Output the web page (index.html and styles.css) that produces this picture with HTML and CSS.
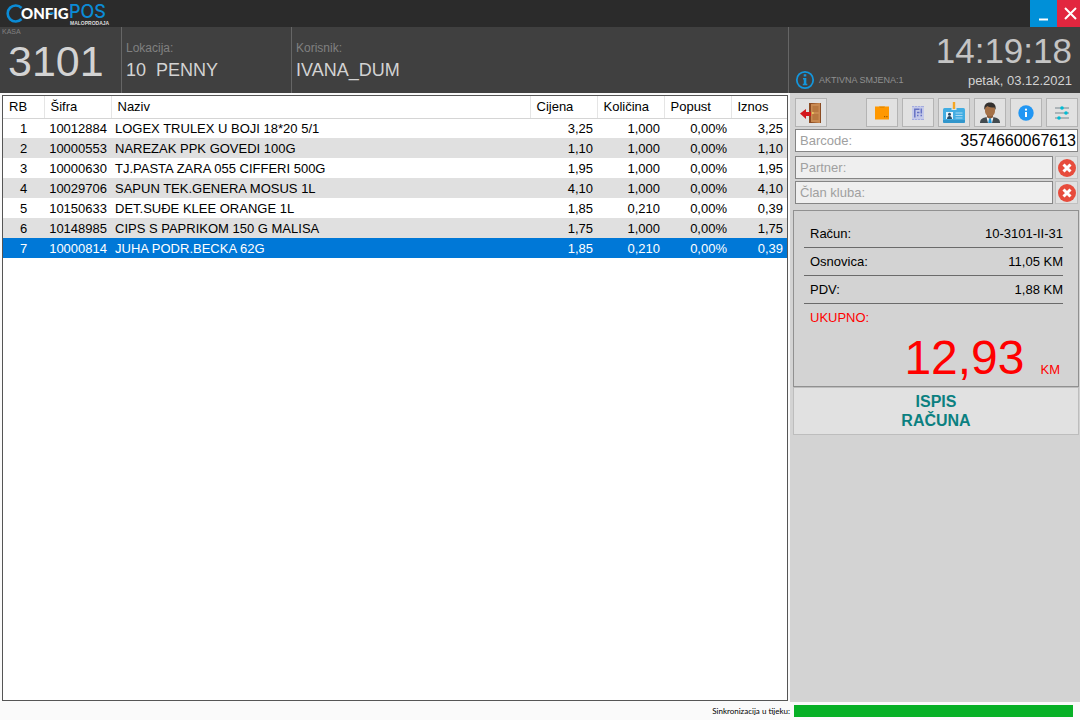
FILE: index.html
```
<!DOCTYPE html>
<html lang="bs">
<head>
  <meta charset="UTF-8">
  <title>ConfigPOS Maloprodaja</title>
  <meta name="viewport" content="width=device-width, initial-scale=1.0">
  <link rel="stylesheet" href="styles.css">
</head>
<body>

<div class="titlebar">
  <svg class="logo" width="112" height="27" viewBox="0 0 112 27" role="img" aria-label="ConfigPOS maloprodaja">
    <path d="M21.500 8A8 8 0 1 0 21.500 19" fill="none" stroke="#0b8bd6" stroke-width="2.600"/>
    <text class="logo-name" x="21" y="19">ONFIG</text>
    <path d="M49.500 12.300h4v2h-4z" fill="#0b8bd6"/>
    <text class="logo-pos" x="69" y="18">POS</text>
    <text class="logo-sub" x="70" y="25">MALOPRODAJA</text>
  </svg>
  <div class="window-buttons">
    <button class="minimize" aria-label="Minimize">
      <svg width="10" height="4" viewBox="0 0 10 4"><path d="M0 1.5h9" stroke="#fff" stroke-width="2"/></svg>
    </button>
    <button class="close" aria-label="Close">
      <svg width="13" height="13" viewBox="0 0 13 13"><path d="M1 1l11 11M12 1L1 12" stroke="#fff" stroke-width="2"/></svg>
    </button>
  </div>
</div>

<header class="header">
  <div class="kasa">
    <span class="kasa-label">KASA</span>
    <span class="kasa-number">3101</span>
  </div>
  <div class="info">
    <span class="info-label">Lokacija:</span>
    <span class="info-value">10 &nbsp;PENNY</span>
  </div>
  <div class="info">
    <span class="info-label">Korisnik:</span>
    <span class="info-value">IVANA_DUM</span>
  </div>
  <div class="clock">
    <div class="time">14:19:18</div>
    <div class="clock-row">
      <svg width="20" height="20" viewBox="0 0 20 20">
        <circle cx="10" cy="10" r="8.2" fill="none" stroke="#1496dc" stroke-width="1.8"/>
        <path d="M8.700 4.200h2.600v2.400H8.700zM8 8h3.300v5.800h1v1.400H7.800v-1.400h1V9.400H8z" fill="#1496dc"/>
      </svg>
      <span class="shift">AKTIVNA SMJENA:1</span>
      <span class="date">petak, 03.12.2021</span>
    </div>
  </div>
</header>

<main class="main">
  <div class="items">
    <table>
      <thead>
        <tr>
          <th class="col-rb">RB</th>
          <th class="col-sifra">Šifra</th>
          <th>Naziv</th>
          <th class="col-num">Cijena</th>
          <th class="col-num">Količina</th>
          <th class="col-num">Popust</th>
          <th class="col-iznos">Iznos</th>
        </tr>
      </thead>
      <tbody>
        <tr><td>1</td><td>10012884</td><td>LOGEX TRULEX U BOJI 18*20 5/1</td><td>3,25</td><td>1,000</td><td>0,00%</td><td>3,25</td></tr>
        <tr><td>2</td><td>10000553</td><td>NAREZAK PPK GOVEDI 100G</td><td>1,10</td><td>1,000</td><td>0,00%</td><td>1,10</td></tr>
        <tr><td>3</td><td>10000630</td><td>TJ.PASTA ZARA 055 CIFFERI 500G</td><td>1,95</td><td>1,000</td><td>0,00%</td><td>1,95</td></tr>
        <tr><td>4</td><td>10029706</td><td>SAPUN TEK.GENERA MOSUS 1L</td><td>4,10</td><td>1,000</td><td>0,00%</td><td>4,10</td></tr>
        <tr><td>5</td><td>10150633</td><td>DET.SUĐE KLEE ORANGE 1L</td><td>1,85</td><td>0,210</td><td>0,00%</td><td>0,39</td></tr>
        <tr><td>6</td><td>10148985</td><td>CIPS S PAPRIKOM 150 G MALISA</td><td>1,75</td><td>1,000</td><td>0,00%</td><td>1,75</td></tr>
        <tr class="selected"><td>7</td><td>10000814</td><td>JUHA PODR.BECKA 62G</td><td>1,85</td><td>0,210</td><td>0,00%</td><td>0,39</td></tr>
      </tbody>
    </table>
  </div>

  <aside class="side">
    <div class="toolbar">
      <button class="tool exit" aria-label="Izlaz">
        <svg width="22" height="22" viewBox="0 0 22 22">
          <path d="M9 1h12v20H9z" fill="#8a4b22"/>
          <path d="M11 2l9-1v20l-9-1z" fill="#c98a52"/>
          <path d="M12.500 4h6v6h-6zM12.500 12h6v6h-6z" fill="#b87840"/>
          <circle cx="12.800" cy="11" r="1" fill="#f0d060"/>
          <path d="M0 11.500L6 7v3h5v4H6v3z" fill="#d3161c"/>
        </svg>
      </button>
      <button class="tool" aria-label="Artikli">
        <svg width="16" height="16" viewBox="0 0 16 16">
          <path d="M1 1.500h14v13H1z" fill="#ff9800"/>
          <path d="M5 1.500h6l-1 1.500H6z" fill="#e68a00"/>
          <path d="M10 11h1.200v1.200H10zM12.300 11h1.200v1.200h-1.200z" fill="#9c5a00"/>
        </svg>
      </button>
      <button class="tool" aria-label="Dokumenti">
        <svg width="16" height="16" viewBox="0 0 16 16">
          <path d="M2 1h12v14H2z" fill="#c5cae9"/>
          <path d="M2 1.500h2M5 1.500h2M8 1.500h2M11 1.500h3M2 14.500h2M5 14.500h2M8 14.500h2M11 14.500h3" stroke="#a4acdf"/>
          <path d="M4.800 3.500v9M4.800 4.300H9.500M7 7.500h2.500M11.300 3.500v5M7 10.500h1.500M10.500 10.500h1.500" fill="none" stroke="#6672c4" stroke-width="1.500"/>
        </svg>
      </button>
      <button class="tool" aria-label="Kartica">
        <svg width="22" height="22" viewBox="0 0 22 22">
          <rect x="0" y="6" width="22" height="15" rx="1.500" fill="#42ade2"/>
          <path d="M0 18h22v1.500a1.500 1.500 0 0 1-1.500 1.500h-19A1.500 1.500 0 0 1 0 19.500z" fill="#3296cb"/>
          <path d="M3 10h7v7H3z" fill="#e8f5fc"/>
          <circle cx="6.500" cy="12.200" r="1.500" fill="#244b68"/>
          <path d="M4 17c0-4 5-4 5 0z" fill="#244b68"/>
          <path d="M12.500 11h7M12.500 13.500h7M12.500 16h7" stroke="#a8daf5"/>
          <path d="M8.500 5h5v3h-5z" fill="#d5e2ea"/>
          <path d="M9.800 0h2.400v7H9.800z" fill="#f5a623"/>
        </svg>
      </button>
      <button class="tool" aria-label="Korisnik">
        <svg width="22" height="22" viewBox="0 0 22 22">
          <path d="M1 21c0-4 2.500-5 6.500-6h7c4 1 6.500 2 6.500 6z" fill="#424b50"/>
          <path d="M8 13h6v3l-3 3-3-3z" fill="#8a5c3c"/>
          <path d="M7.500 15l3.500 2 3.500-2-1.500 6H9z" fill="#f4f8fa"/>
          <path d="M10 16.500h2l.8 4.500H9.200z" fill="#2196d8"/>
          <path d="M6 6c0-4 10-4 10 0v3c0 7-10 7-10 0z" fill="#a47148"/>
          <path d="M5.500 8C4.500 3 7 .5 11 .5S17.500 3 16.500 8l-1-2.500c-3 0-6-.500-7-1.500L6.500 5.500z" fill="#33302e"/>
        </svg>
      </button>
      <button class="tool" aria-label="Informacije">
        <svg width="16" height="16" viewBox="0 0 16 16">
          <circle cx="8" cy="8" r="7.700" fill="#2196f3"/>
          <circle cx="8" cy="4.700" r="1.100" fill="#fff"/>
          <path d="M8 7v5" stroke="#fff" stroke-width="2"/>
        </svg>
      </button>
      <button class="tool" aria-label="Postavke">
        <svg width="16" height="16" viewBox="0 0 16 16">
          <path d="M1 3h14M1 8h14M1 13h14" stroke="#9aa5ab" stroke-width="1.500"/>
          <circle cx="8" cy="3" r="1.800" fill="#00bcd4"/>
          <circle cx="12" cy="8" r="1.800" fill="#00bcd4"/>
          <circle cx="5" cy="13" r="1.800" fill="#00bcd4"/>
        </svg>
      </button>
    </div>

    <div class="field barcode">
      <label for="barcode">Barcode:</label>
      <input type="text" id="barcode" value="3574660067613">
    </div>

    <div class="field-row">
      <div class="field">
        <label for="partner">Partner:</label>
        <input type="text" id="partner">
      </div>
      <button class="clear" aria-label="Obriši partnera">
        <svg width="20" height="20" viewBox="0 0 20 20"><circle cx="10" cy="10" r="9" fill="#e74c3c"/><path d="M6.500 6.500l7 7M13.500 6.500l-7 7" stroke="#fff" stroke-width="3"/></svg>
      </button>
    </div>

    <div class="field-row">
      <div class="field">
        <label for="clan">Član kluba:</label>
        <input type="text" id="clan">
      </div>
      <button class="clear" aria-label="Obriši člana kluba">
        <svg width="20" height="20" viewBox="0 0 20 20"><circle cx="10" cy="10" r="9" fill="#e74c3c"/><path d="M6.500 6.500l7 7M13.500 6.500l-7 7" stroke="#fff" stroke-width="3"/></svg>
      </button>
    </div>

    <div class="totals">
      <div class="line"><span>Račun:</span><span>10-3101-II-31</span></div>
      <div class="line"><span>Osnovica:</span><span>11,05 KM</span></div>
      <div class="line"><span>PDV:</span><span>1,88 KM</span></div>
      <div class="total-label">UKUPNO:</div>
      <div class="total"><span class="amount">12,93</span><span>KM</span></div>
    </div>
    <button class="print">ISPIS<br>RAČUNA</button>
  </aside>
</main>

<footer class="footer">
  <label for="sync">Sinkronizacija u tijeku:</label>
  <progress id="sync" value="100" max="100"></progress>
</footer>

</body>
</html>
```
FILE: styles.css
```
* {
  box-sizing: border-box;
}

body {
  margin: 0;
  min-height: 100vh;
  display: flex;
  flex-direction: column;
  font-family: "Liberation Sans", Arial, sans-serif;
  font-size: 13px;
  color: #000;
  background: #fafafa;
}

button {
  padding: 0;
  font-family: inherit;
  cursor: pointer;
}

svg {
  display: block;
  flex: none;
}

/* title bar */
.titlebar {
  display: flex;
  justify-content: space-between;
  height: 27px;
  background: #2b2b2b;
}

.logo-name {
  font: 900 15px Lato, sans-serif;
  fill: #fff;
}

.logo-pos {
  font: 500 18px Inter, sans-serif;
  fill: #0b8bd6;
}

.logo-sub {
  font: bold 5px "Liberation Sans", sans-serif;
  fill: #ddd;
}

.window-buttons {
  display: flex;
}

.window-buttons button {
  display: flex;
  justify-content: center;
  align-items: center;
  border: none;
}

.window-buttons .minimize {
  width: 27px;
  padding-top: 12px;
  background: #0090d8;
}

.window-buttons .close {
  width: 23px;
  padding-left: 3px;
  background: #e2263f;
}

/* header */
.header {
  display: grid;
  grid-template-columns: 121px 170px 1fr 292px;
  height: 66px;
  background: #404040;
  color: #d3d3d3;
}

.header > div + div {
  border-left: 1px solid #666;
}

.kasa {
  display: flex;
  flex-direction: column;
  padding-left: 2px;
}

.kasa-label {
  font-size: 7px;
  line-height: 9px;
  color: #808080;
}

.kasa-number {
  padding-left: 6px;
  font-size: 43px;
  line-height: 50px;
}

.info {
  display: flex;
  flex-direction: column;
  padding: 13px 0 0 4px;
}

.info-label {
  font-size: 12px;
  line-height: 16px;
  color: #808080;
}

.info-value {
  font-size: 18px;
  line-height: 28px;
}

.clock {
  padding: 4px 8px 0 6px;
}

.time {
  font-size: 35px;
  line-height: 40px;
  text-align: right;
  color: #c4c4c4;
}

.clock-row {
  display: flex;
  align-items: center;
  height: 18px;
}

.shift {
  padding-left: 4px;
  font-size: 9px;
  color: #909090;
}

.date {
  margin-left: auto;
}

/* main area */
.main {
  flex: 1;
  display: grid;
  grid-template-columns: 1fr 290px;
}

.items {
  margin: 2px 2px 1px;
  border: 1px solid #555;
  background: #fff;
}

table {
  width: 100%;
  table-layout: fixed;
  border-collapse: collapse;
}

th {
  height: 22px;
  padding: 0 6px;
  border-right: 1px solid #e5e5e5;
  border-bottom: 1px solid #d5d5d5;
  font-weight: normal;
  text-align: left;
}

th:last-child {
  border-right: none;
}

.col-rb {
  width: 41px;
}

.col-sifra,
.col-num {
  width: 67px;
}

.col-iznos {
  width: 56px;
}

td {
  height: 20px;
  padding: 0 4px;
  text-align: right;
  white-space: nowrap;
}

td:first-child {
  text-align: center;
}

td:nth-child(3) {
  text-align: left;
}

tbody tr:nth-child(even) {
  background: #e0e0e0;
}

tbody tr.selected {
  background: #0078d7;
  color: #fff;
}

/* right side */
.side {
  padding: 5px 1px 0 3px;
  background: #d3d3d3;
}

.toolbar {
  display: flex;
  gap: 4px;
  margin: 0 1px 2px 2px;
}

.tool {
  display: flex;
  justify-content: center;
  align-items: center;
  width: 32px;
  height: 29px;
  border: 1px solid #b4b4b4;
  background: #e1e1e1;
}

.exit {
  margin-right: auto;
}

.field {
  flex: 1;
  min-width: 0;
  display: flex;
  align-items: center;
  height: 23px;
  padding: 0 1px 0 4px;
  border: 1px solid #858585;
  background: #efefef;
}

.field label {
  color: #a0a0a0;
}

.field input {
  flex: 1;
  min-width: 0;
  padding: 0;
  border: none;
  outline: none;
  background: transparent;
  font-family: inherit;
  font-size: 16px;
  text-align: right;
}

.barcode {
  margin: 0 1px 4px 2px;
  background: #fff;
}

.field-row {
  display: flex;
  gap: 2px;
  margin: 0 1px 2px 2px;
}

.clear {
  flex: none;
  display: flex;
  justify-content: center;
  align-items: center;
  width: 23px;
  height: 23px;
  border: 1px solid #c0c0c0;
  background: #e1e1e1;
}

.totals {
  margin-top: 6px;
  padding: 9px 15px 0 10px;
  height: 177px;
  border: 1px solid #909090;
}

.line {
  display: flex;
  justify-content: space-between;
  padding-left: 6px;
  line-height: 27px;
  border-bottom: 1px solid #6a6a6a;
}

.total-label {
  padding-left: 6px;
  line-height: 28px;
  color: #f00;
}

.total {
  display: flex;
  justify-content: flex-end;
  align-items: baseline;
  gap: 16px;
  padding-right: 3px;
  line-height: 52px;
  color: #f00;
}

.amount {
  font-size: 48px;
}

.print {
  width: 100%;
  height: 48px;
  border: 1px solid #bdbdbd;
  background: #e1e1e1;
  color: #0b8080;
  font-size: 16px;
  font-weight: bold;
  line-height: 19px;
}

/* footer */
.footer {
  display: flex;
  justify-content: flex-end;
  align-items: center;
  gap: 4px;
  height: 18px;
  padding-right: 7px;
}

.footer label {
  font-family: Lato, sans-serif;
  font-size: 8px;
}

progress {
  width: 279px;
  height: 12px;
  appearance: none;
}

progress::-webkit-progress-bar {
  background: #e6e6e6;
}

progress::-webkit-progress-value {
  background: #06b025;
}
```
